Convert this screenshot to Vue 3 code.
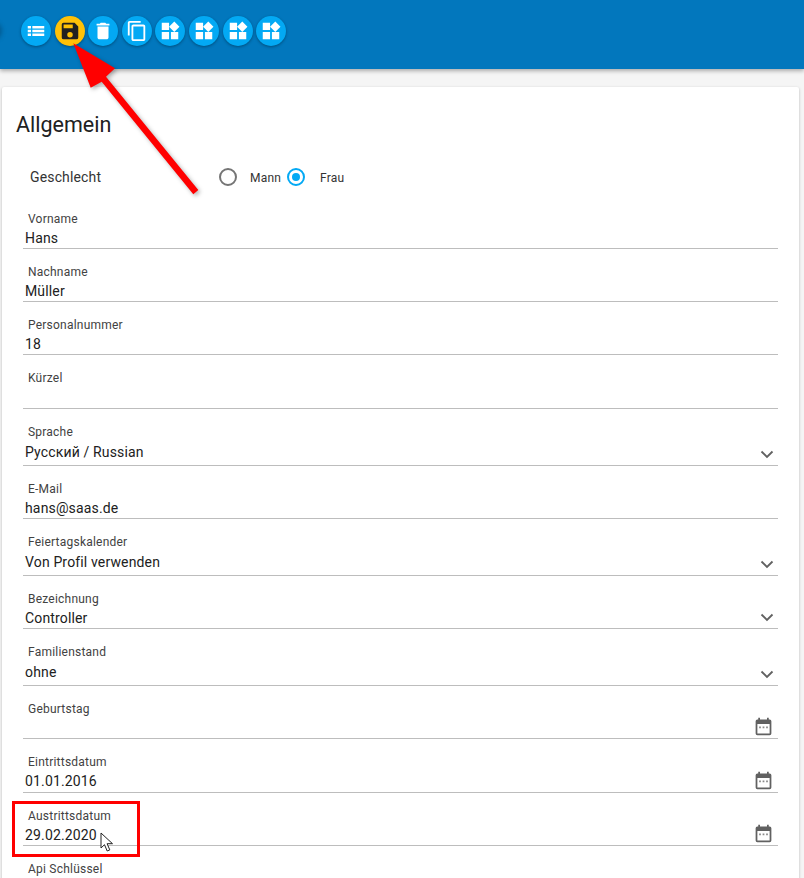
<script setup>
const toolbar = ['list', 'save', 'delete', 'copy', 'widgets', 'widgets', 'widgets', 'widgets']

const fields = [
  { label: 'Vorname', value: 'Hans' },
  { label: 'Nachname', value: 'Müller' },
  { label: 'Personalnummer', value: '18' },
  { label: 'Kürzel', value: '' },
  { label: 'Sprache', value: 'Русский / Russian', kind: 'select' },
  { label: 'E-Mail', value: 'hans@saas.de' },
  { label: 'Feiertagskalender', value: 'Von Profil verwenden', kind: 'select' },
  { label: 'Bezeichnung', value: 'Controller', kind: 'select', short: true },
  { label: 'Familienstand', value: 'ohne', kind: 'select' },
  { label: 'Geburtstag', value: '', kind: 'date' },
  { label: 'Eintrittsdatum', value: '01.01.2016', kind: 'date' },
  { label: 'Austrittsdatum', value: '29.02.2020', kind: 'date' },
  { label: 'Api Schlüssel', value: '' },
]
</script>

<template>
  <div class="page">
    <header class="topbar">
      <span class="hidden-btn"></span>
      <button
        v-for="(icon, i) in toolbar"
        :key="i"
        class="fab"
        :class="{ 'fab-save': icon === 'save' }"
      >
        <svg v-if="icon === 'list'" viewBox="0 0 24 24" fill="#fff">
          <path d="M3 6.500h3.500v2.800H3zM8 6.500h13v2.800H8zM3 10.600h3.500v2.800H3zM8 10.600h13v2.800H8zM3 14.700h3.500v2.800H3zM8 14.700h13v2.800H8z" />
        </svg>
        <svg v-else-if="icon === 'save'" viewBox="0 0 24 24" fill="#212121">
          <path d="M17 3H5a2 2 0 0 0-2 2v14a2 2 0 0 0 2 2h14a2 2 0 0 0 2-2V7l-4-4zm-5 16a3 3 0 1 1 0-6 3 3 0 0 1 0 6zm3-10H5V5h10v4z" />
        </svg>
        <svg v-else-if="icon === 'delete'" viewBox="0 0 24 24" fill="#fff">
          <path d="M6 19c0 1.100.9 2 2 2h8c1.100 0 2-.9 2-2V7H6v12zM19 4h-3.500l-1-1h-5l-1 1H5v2h14V4z" />
        </svg>
        <svg v-else-if="icon === 'copy'" viewBox="0 0 24 24" fill="#fff">
          <path d="M16 1H4c-1.100 0-2 .9-2 2v14h2V3h12V1zm3 4H8c-1.100 0-2 .9-2 2v14c0 1.100.9 2 2 2h11c1.100 0 2-.9 2-2V7c0-1.100-.9-2-2-2zm0 16H8V7h11v14z" />
        </svg>
        <svg v-else viewBox="0 0 24 24" fill="#fff">
          <path d="M13 13v8h8v-8h-8zM3 21h8v-8H3v8zM3 3v8h8V3H3zm13.660-1.310L11 7.340 16.660 13l5.660-5.660-5.660-5.650z" />
        </svg>
      </button>
    </header>

    <main class="card">
      <h2 class="title">Allgemein</h2>

      <div class="gender-row">
        <span class="gender-label">Geschlecht</span>
        <span class="radio"></span>
        <span class="radio-text mann">Mann</span>
        <span class="radio radio-on"><i></i></span>
        <span class="radio-text frau">Frau</span>
      </div>

      <div class="fields">
        <div
          v-for="field in fields"
          :key="field.label"
          class="field"
          :class="{ 'field-select': field.kind === 'select' && !field.short }"
        >
          <label>{{ field.label }}</label>
          <div class="value-line">
            <span class="value">{{ field.value }}</span>
            <svg v-if="field.kind === 'select'" class="chevron" viewBox="0 0 14 9" width="14" height="9">
              <path d="M1.500 1.500 7 7l5.500-5.500" fill="none" stroke="#616161" stroke-width="1.800" />
            </svg>
            <svg v-if="field.kind === 'date'" class="calendar" viewBox="0 0 24 24" width="21" height="21" fill="#616161">
              <path d="M19 4h-1V2h-2v2H8V2H6v2H5a2 2 0 0 0-2 2v14a2 2 0 0 0 2 2h14a2 2 0 0 0 2-2V6a2 2 0 0 0-2-2zm0 16H5V9h14v11z" />
              <path d="M7 12h2v2H7zM11 12h2v2h-2zM15 12h2v2h-2z" fill="#8a8a8a" />
            </svg>
          </div>
        </div>
      </div>
    </main>

    <!-- screenshot annotations -->
    <svg class="arrow" width="145" height="165" viewBox="0 0 145 165">
      <path d="M13.300 3.300 55 28.300 46 36.700 138.300 150 133.300 154.300 41.700 41.700 30.700 47.700z" fill="#f00" />
    </svg>
    <div class="mark"></div>
    <svg class="cursor" width="14" height="21" viewBox="0 0 14 21">
      <path d="M1 1v15l3.500-3.300 2.700 6.300 2.600-1.100-2.700-6.200H12.500z" fill="#fff" stroke="#222" stroke-width="1" stroke-linejoin="round" />
    </svg>
  </div>
</template>

<style>
html, body {
  margin: 0;
  height: 878px;
  overflow: hidden;
}
</style>

<style scoped>
.page {
  position: relative;
  height: 878px;
  overflow: hidden;
  background: #f5f5f5;
  font-family: Roboto, "Noto Sans", sans-serif;
  color: #212121;
}

.topbar {
  position: relative;
  display: flex;
  align-items: flex-start;
  gap: 3.6px;
  height: 69px;
  padding: 16px 0 0 21px;
  box-sizing: border-box;
  background: #0277bd;
  box-shadow: 0 2px 4px rgba(0, 0, 0, 0.3);
}

.hidden-btn {
  position: absolute;
  left: -14px;
  top: 22px;
  width: 16px;
  height: 18px;
  border-radius: 50%;
  background: rgba(0, 40, 70, 0.35);
  filter: blur(2px);
}

.fab {
  display: flex;
  align-items: center;
  justify-content: center;
  width: 30px;
  height: 30px;
  padding: 0;
  border: 0;
  border-radius: 50%;
  background: #03a9f4;
  box-shadow: 0 1px 3px rgba(0, 0, 0, 0.35);
}

.fab svg {
  width: 22px;
  height: 22px;
}

.fab-save {
  background: #ffc107;
}

.card {
  height: 900px;
  margin: 18px 5px 0 2px;
  padding-top: 1px;
  background: #fff;
  box-shadow: 0 1px 3px rgba(0, 0, 0, 0.25);
  border-radius: 2px;
}

.title {
  margin: 13px 0 0 14px;
  font-size: 21.500px;
  font-weight: 400;
  line-height: 48px;
  height: 48px;
}

.gender-row {
  display: flex;
  align-items: center;
  height: 30px;
  margin-top: 13px;
  font-size: 14px;
}

.gender-label {
  width: 189px;
  margin-left: 28px;
  letter-spacing: 0.15px;
  color: #333;
}

.radio {
  display: flex;
  align-items: center;
  justify-content: center;
  width: 18px;
  height: 18px;
  box-sizing: border-box;
  border: 2px solid #757575;
  border-radius: 50%;
}

.radio-on {
  border-color: #03a9f4;
}

.radio-on i {
  width: 8px;
  height: 8px;
  border-radius: 50%;
  background: #03a9f4;
}

.radio-text {
  position: relative;
  top: 1px;
  font-size: 12px;
  letter-spacing: 0.2px;
  color: #333;
}

.mann {
  margin-left: 13px;
  width: 37px;
}

.frau {
  margin-left: 15px;
}

.fields {
  margin: 12.700px 21px 0 21px;
}

.field {
  display: flex;
  flex-direction: column;
  height: 53.250px;
  box-sizing: border-box;
  padding-top: 7px;
}

.field-select {
  height: 57px;
}

.field label {
  padding-left: 5px;
  font-size: 12px;
  line-height: 14px;
  letter-spacing: 0.22px;
  color: #424242;
}

.value-line {
  position: relative;
  flex: 1;
  margin-bottom: 9px;
  padding: 3px 0 0 2px;
  border-bottom: 1px solid #bdbdbd;
  width: 755px;
  box-sizing: border-box;
}

.field-select .value {
  padding-top: 1px;
}

.value {
  font-size: 14px;
  line-height: 18px;
  display: block;
  letter-spacing: 0.15px;
}

.chevron {
  position: absolute;
  right: 4px;
  bottom: 6px;
}

.calendar {
  position: absolute;
  right: 4px;
  bottom: 1px;
}

.arrow {
  position: absolute;
  left: 60px;
  top: 40px;
  filter: drop-shadow(2px 2px 2px rgba(0, 0, 0, 0.3));
}

.mark {
  position: absolute;
  left: 12px;
  top: 801px;
  width: 128px;
  height: 56px;
  box-sizing: border-box;
  border: 3px solid #f00;
}

.cursor {
  position: absolute;
  left: 100px;
  top: 832px;
}
</style>
